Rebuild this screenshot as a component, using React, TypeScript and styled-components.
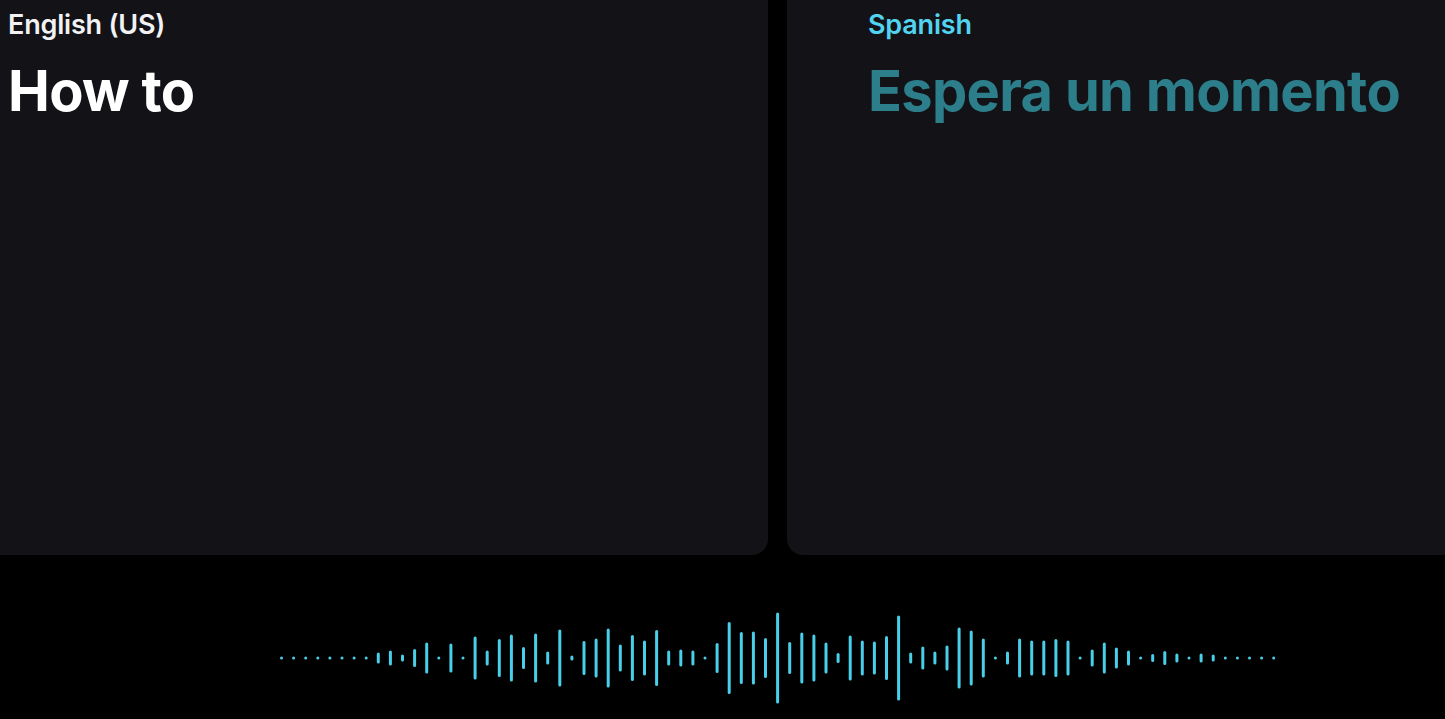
import React from "react";
import styled, { createGlobalStyle } from "styled-components";

const GlobalStyle = createGlobalStyle`
  html, body {
    margin: 0;
    padding: 0;
    background: #000000;
    overflow: hidden;
  }
  body {
    font-family: Inter, "Noto Sans", "Liberation Sans", sans-serif;
  }
`;

const Screen = styled.div`
  width: 1445px;
  height: 719px;
  background: #000000;
  display: flex;
  flex-direction: column;
`;

const Panels = styled.div`
  display: grid;
  grid-template-columns: 768px 1fr;
  column-gap: 19px;
  height: 555px;
`;

const Panel = styled.section<{ $side: "left" | "right" }>`
  background: #131217;
  padding: ${(p) => (p.$side === "left" ? "9px 0 0 8px" : "9px 0 0 81px")};
  border-radius: ${(p) =>
    p.$side === "left" ? "0 0 16px 0" : "0 0 0 16px"};
  display: flex;
  flex-direction: column;
`;

const LangLabel = styled.div<{ $accent?: boolean }>`
  font-size: 27px;
  font-weight: 600;
  line-height: 32px;
  letter-spacing: -0.2px;
  color: ${(p) => (p.$accent ? "#52d4f0" : "#f2f2f4")};
`;

const Phrase = styled.div<{ $accent?: boolean }>`
  margin-top: 17px;
  font-size: 56px;
  font-weight: 700;
  line-height: 66px;
  letter-spacing: -0.7px;
  color: ${(p) => (p.$accent ? "#2d7e8b" : "#ffffff")};
`;

const WaveArea = styled.div`
  flex: 1;
  display: flex;
  align-items: flex-start;
  padding: 53px 0 0 279px;
`;

const heights = [
  3, 3, 3, 3, 3, 3, 3, 3, 11, 15, 7, 18, 31, 3, 29, 3, 43, 15, 38, 47, 22, 49,
  13, 57, 5, 34, 39, 59, 27, 46, 35, 56, 15, 17, 15, 3, 30, 72, 52, 53, 40, 91,
  32, 51, 47, 31, 10, 45, 35, 33, 44, 85, 11, 23, 13, 25, 61, 55, 39, 3, 13, 39,
  35, 35, 38, 35, 3, 17, 31, 21, 15, 3, 8, 14, 9, 3, 9, 7, 3, 3, 3, 3, 3,
];

const STEP = 12.1;

const Waveform: React.FC = () => {
  const width = Math.ceil((heights.length - 1) * STEP + 4);
  return (
    <svg width={width} height={100} viewBox={`0 0 ${width} 100`}>
      {heights.map((h, i) => {
        const x = 2.5 + i * STEP;
        const half = Math.max(0.01, (h - 3) / 2);
        return (
          <line
            key={i}
            x1={x}
            x2={x}
            y1={50 - half}
            y2={50 + half}
            stroke="#48cfe9"
            strokeWidth={3}
            strokeLinecap="round"
          />
        );
      })}
    </svg>
  );
};

export default function App() {
  return (
    <>
      <GlobalStyle />
      <Screen>
        <Panels>
          <Panel $side="left">
            <LangLabel>English (US)</LangLabel>
            <Phrase>How to</Phrase>
          </Panel>
          <Panel $side="right">
            <LangLabel $accent>Spanish</LangLabel>
            <Phrase $accent>Espera un momento</Phrase>
          </Panel>
        </Panels>
        <WaveArea>
          <Waveform />
        </WaveArea>
      </Screen>
    </>
  );
}
